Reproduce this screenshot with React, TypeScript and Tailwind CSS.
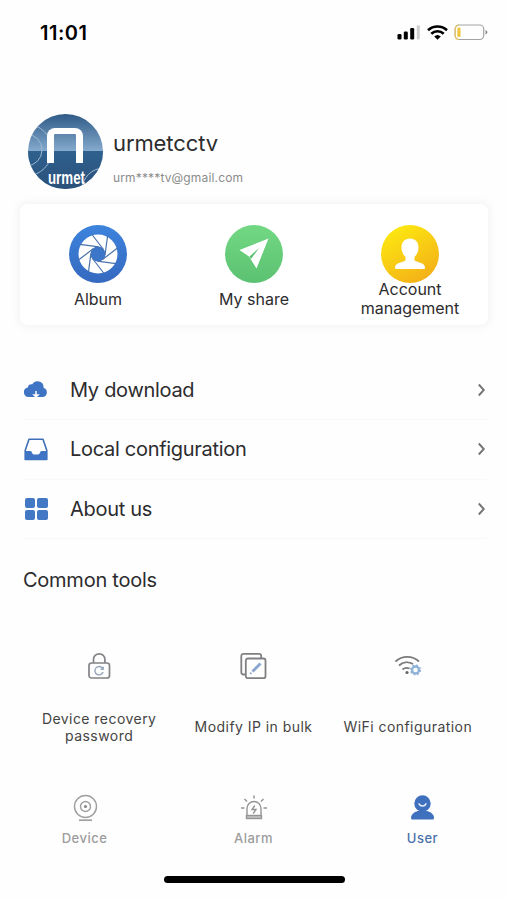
import React from 'react';

const Avatar = () => (
  <div className="relative h-[75px] w-[75px] overflow-hidden rounded-full bg-linear-to-b from-[#2f5b87] to-[#86abce] to-50%">
    <div className="absolute inset-x-0 bottom-0 h-[38px] bg-linear-to-b from-[#2f618e] to-[#2a5079]" />
    <svg className="absolute inset-0" width="75" height="75" viewBox="0 0 75 75" fill="none" stroke="#9db9d3" strokeWidth="1">
      <circle cx="-2" cy="36" r="16" />
      <circle cx="-2" cy="36" r="26" />
      <circle cx="76" cy="76" r="22" />
      <circle cx="76" cy="76" r="15" />
    </svg>
    <div className="absolute left-[19px] top-[14px] h-[35px] w-[36px] rounded-t-[8px] border-x-[7px] border-t-[6px] border-white" />
    <div className="absolute left-[20px] top-[54px] origin-left scale-x-[0.7] font-['Liberation_Sans'] text-[19px] leading-[19px] font-bold text-white">
      urmet
    </div>
  </div>
);

const AlbumIcon = () => (
  <svg width="58" height="58" viewBox="0 0 58 58">
    <defs>
      <linearGradient id="album" x1="0" y1="0" x2="0" y2="1">
        <stop offset="0" stopColor="#3c83dc" />
        <stop offset="1" stopColor="#3669bf" />
      </linearGradient>
    </defs>
    <circle cx="29" cy="29" r="29" fill="url(#album)" />
    <circle cx="29" cy="29" r="19.5" fill="#fff" />
    <circle cx="29" cy="29" r="7.5" fill="#3c76c9" />
    {[0, 45, 90, 135, 180, 225, 270, 315].map((angle) => (
      <path
        key={angle}
        d="M23 9.5 L34.5 24.5"
        stroke="#4a72ab"
        strokeWidth="1.2"
        transform={`rotate(${angle} 29 29)`}
      />
    ))}
  </svg>
);

const ShareIcon = () => (
  <svg width="58" height="58" viewBox="0 0 58 58">
    <defs>
      <linearGradient id="share" x1="0" y1="0" x2="0" y2="1">
        <stop offset="0" stopColor="#72d883" />
        <stop offset="1" stopColor="#5cc273" />
      </linearGradient>
    </defs>
    <circle cx="29" cy="29" r="29" fill="url(#share)" />
    <path d="M43.5 13.500 14.500 25 24 31.500 31.500 43.500z" fill="#fff" />
    <path d="m34 23-9.500 8.500 1.500 2.500z" fill="#5cc273" />
  </svg>
);

const AccountIcon = () => (
  <svg width="58" height="58" viewBox="0 0 58 58">
    <defs>
      <linearGradient id="account" x1="0.2" y1="0" x2="0.8" y2="1">
        <stop offset="0" stopColor="#fdea10" />
        <stop offset="1" stopColor="#f3ad18" />
      </linearGradient>
    </defs>
    <circle cx="29" cy="29" r="29" fill="url(#account)" />
    <path
      d="M29 13.5c-5.300 0-8.500 3.700-8.500 9 0 4 1.500 7 4 9.500v3.500c-3.500 2-10.500 2.500-10.500 7 0 1 .6 1.600 1.600 1.600h26.800c1 0 1.600-.6 1.600-1.600 0-4.500-7-5-10.500-7V32c2.500-2.500 4-5.500 4-9.500 0-5.300-3.200-9-8.500-9z"
      fill="#fff"
    />
  </svg>
);

const CloudIcon = () => (
  <svg width="24" height="24" viewBox="0 0 24 24">
    <path d="M5 19a4.800 4.800 0 0 1-1.200-9.500A4 4 0 0 1 8.300 6.300 6 6 0 0 1 19.500 9.700 4.800 4.800 0 0 1 19 19z" fill="#3f74c4" />
    <path d="M12 13v6M10 17l2 2 2-2z" stroke="#fff" strokeWidth="1.500" fill="#fff" />
  </svg>
);

const InboxIcon = () => (
  <svg width="24" height="24" viewBox="0 0 24 24">
    <path d="M1.200 13.500 5 2.200h14l3.800 11.300v9H1.200z" fill="none" stroke="#3f6fb8" strokeWidth="1.600" strokeLinejoin="round" />
    <path d="M1 14h5.500c1.500 0 1.500 3.500 3.500 3.500h4c2 0 2-3.500 3.500-3.500H23v9H1z" fill="#3f74c4" />
  </svg>
);

const GridIcon = () => (
  <div className="grid h-[22px] w-[23px] grid-cols-2 gap-[2px]">
    {[0, 1, 2, 3].map((i) => (
      <div key={i} className="rounded-[2px] bg-[#4278c4]" />
    ))}
  </div>
);

const LockIcon = () => (
  <svg width="28" height="28" viewBox="0 0 28 28" fill="none" stroke="#838387" strokeWidth="1.700">
    <rect x="4" y="11" width="20.500" height="15" rx="2.500" />
    <path d="M8.500 11V7.500a5.700 5.700 0 0 1 11.400 0V11" />
    <path d="M17.500 16.200a4.200 4.200 0 1 0 .6 3.800M18.200 14.800v2.500h-2.500" stroke="#98a5ba" strokeWidth="1.400" />
  </svg>
);

const ModifyIcon = () => (
  <svg width="28" height="28" viewBox="0 0 28 28" fill="none" stroke="#808084" strokeWidth="1.800">
    <path d="M6 22.500H4.500a2.200 2.200 0 0 1-2.200-2.200V4a2.200 2.200 0 0 1 2.200-2.200h15.500A2.200 2.200 0 0 1 22.200 4v2" />
    <rect x="6.800" y="6.500" width="19.700" height="19.700" rx="2" />
    <path d="m13.500 19.500 8-8" stroke="#8aa4cf" strokeWidth="2.800" />
    <path d="m11.300 21.800 1-1" stroke="#8aa4cf" strokeWidth="2" />
  </svg>
);

const WifiGearIcon = () => (
  <svg width="28" height="24" viewBox="0 0 28 24" fill="none" stroke="#7a7a7a" strokeWidth="1.800">
    <path d="M1.500 7.500a17.500 17.500 0 0 1 23.500 0M5 11.500a12 12 0 0 1 14-1.500M8.500 15.500a7 7 0 0 1 7-1" />
    <circle cx="13" cy="18.500" r="1.600" fill="#666" stroke="none" />
    <circle cx="21.500" cy="16" r="3.500" stroke="#8fb2d6" strokeWidth="2.400" />
    <circle cx="21.500" cy="16" r="5" stroke="#8fb2d6" strokeWidth="1.200" strokeDasharray="2 1.930" />
  </svg>
);

const DeviceIcon = () => (
  <svg width="28" height="28" viewBox="0 0 28 28" fill="none" stroke="#9f9f9f" strokeWidth="1.400">
    <circle cx="14.500" cy="12.500" r="11" />
    <circle cx="14.500" cy="12.500" r="5" />
    <circle cx="14.500" cy="12.500" r="1.600" fill="#888" stroke="none" />
    <path d="M8 26.200h13" strokeWidth="1.700" />
  </svg>
);

const AlarmIcon = () => (
  <svg width="28" height="28" viewBox="0 0 28 28" fill="none" stroke="#959595" strokeWidth="1.400">
    <path d="M7 21.500v-7a7 7 0 0 1 14 0v7" />
    <rect x="6.500" y="21.500" width="15" height="3" fill="#c4c4c4" />
    <path d="M14.800 11.500 12 15.500h4l-2.800 4" />
    <path d="M14 1.500v3M4.500 5 7 7.500M23.500 5 21 7.500M1 14h3.500M23.500 14H27" strokeWidth="1.500" />
  </svg>
);

const UserIcon = () => (
  <svg width="28" height="28" viewBox="0 0 28 28">
    <circle cx="13.500" cy="9.500" r="8.200" fill="#3f70bd" />
    <path d="M2 24c0-4 4-6.500 7.500-7.300h8c3.500.8 7.500 3.300 7.500 7.300 0 .9-.5 1.500-1.500 1.500h-20c-1 0-1.500-.6-1.500-1.500z" fill="#3f70bd" />
    <path d="M10 9.800a3.900 3.900 0 0 0 7 0" fill="none" stroke="#e8f0fb" strokeWidth="1.500" strokeLinecap="round" />
  </svg>
);

const StatusIcons = () => (
  <svg width="92" height="18" viewBox="0 0 92 18">
    <rect x="0.500" y="10" width="4" height="5.500" rx="1.300" />
    <rect x="6.800" y="7.500" width="4" height="8" rx="1.300" />
    <rect x="13.200" y="4" width="4" height="11.500" rx="1.300" />
    <rect x="19.800" y="1.200" width="3" height="14.300" rx="1" fill="#cfcfcf" />
    <g fill="none" stroke="#000" strokeWidth="2.600">
      <path d="M31 6.300a13.700 13.700 0 0 1 19 0" />
      <path d="M34.300 9.800a9 9 0 0 1 12.400 0" />
    </g>
    <path d="M40.500 15.800 37.200 12.500a4.800 4.800 0 0 1 6.600 0z" />
    <rect x="58.200" y="1" width="28.500" height="14.500" rx="4" fill="none" stroke="#a3a3a3" strokeWidth="1.200" />
    <path d="M62 1a3.800 3.800 0 0 0-3.800 3.800v7a3.800 3.800 0 0 0 3.800 3.700" fill="none" stroke="#e6c766" strokeWidth="1.200" />
    <rect x="60.300" y="3.500" width="3.200" height="9.500" rx="1.300" fill="#f0c63c" />
    <path d="M88.500 6v4.500c1.200-.4 1.900-1.200 1.900-2.200s-.7-1.900-1.900-2.300z" fill="#8a8a8a" />
  </svg>
);

const ChevronIcon = () => (
  <svg width="10" height="14" viewBox="0 0 10 14" fill="none" stroke="#757575" strokeWidth="1.900">
    <path d="m1.800 1.500 5 5.500-5 5.500" />
  </svg>
);

const shortcuts = [
  { label: 'Album', icon: <AlbumIcon /> },
  { label: 'My share', icon: <ShareIcon /> },
  { label: 'Account management', icon: <AccountIcon /> },
];

const menuItems = [
  { label: 'My download', icon: <CloudIcon /> },
  { label: 'Local configuration', icon: <InboxIcon /> },
  { label: 'About us', icon: <GridIcon /> },
];

const tools = [
  { label: 'Device recovery password', icon: <LockIcon /> },
  { label: 'Modify IP in bulk', icon: <ModifyIcon /> },
  { label: 'WiFi configuration', icon: <WifiGearIcon /> },
];

const tabs = [
  { label: 'Device', icon: <DeviceIcon />, active: false },
  { label: 'Alarm', icon: <AlarmIcon />, active: false },
  { label: 'User', icon: <UserIcon />, active: true },
];

export default function App() {
  return (
    <div className="flex h-[900px] w-[507px] flex-col overflow-hidden bg-[#fefefe] font-['Inter',sans-serif] text-[#2c2c2e]">
      {/* Status bar */}
      <div className="flex h-[65px] shrink-0 items-center justify-between pl-[40px] pr-[18px]">
        <span className="text-[20px] font-semibold tracking-[0.5px] text-black">11:01</span>
        <StatusIcons />
      </div>

      {/* Profile */}
      <div className="mt-[49px] flex h-[75px] shrink-0 gap-[10px] pl-[28px]">
        <Avatar />
        <div className="flex flex-col pt-[15px]">
          <span className="text-[22px] leading-[28px] tracking-[-0.1px]">urmetcctv</span>
          <span className="mt-[13px] text-[12px] leading-[16px] tracking-[0.15px] text-[#8c8c8c]">urm****tv@gmail.com</span>
        </div>
      </div>

      {/* Shortcuts */}
      <div className="mx-[20px] mt-[15px] grid h-[121px] w-[468px] shrink-0 grid-cols-3 rounded-[8px] bg-white pt-[21px] shadow-[0_0_9px_3px_rgba(0,0,0,0.04)]">
        {shortcuts.map(({ label, icon }) => (
          <button key={label} className="flex flex-col items-center">
            {icon}
            <span className="-mt-[3px] flex h-[38px] w-[110px] items-center justify-center text-center text-[16px] leading-[19px]">
              {label}
            </span>
          </button>
        ))}
      </div>

      {/* Menu */}
      <div className="ml-[24px] mr-[20px] mt-[36px] shrink-0">
        {menuItems.map(({ label, icon }) => (
          <button key={label} className="flex h-[59.3px] w-full items-center border-b border-[#f8f8f8] text-left">
            <span className="flex w-[24px] justify-center">{icon}</span>
            <span className="ml-[22px] flex-1 text-[20px] tracking-[-0.3px]">{label}</span>
            <ChevronIcon />
          </button>
        ))}
      </div>

      <h2 className="ml-[23px] mt-[27px] shrink-0 text-[20px] leading-[28px] tracking-[-0.25px]">Common tools</h2>

      {/* Tools */}
      <div className="mx-[22px] mt-[58px] grid h-[96px] shrink-0 grid-cols-3">
        {tools.map(({ label, icon }) => (
          <button key={label} className="flex flex-col items-center">
            <span className="flex h-[28px] items-center">{icon}</span>
            <span className="mt-[30px] flex h-[34px] w-[140px] items-center justify-center text-center text-[14px] leading-[17px] tracking-[0.45px] text-[#444]">
              {label}
            </span>
          </button>
        ))}
      </div>

      {/* Tab bar */}
      <div className="mt-[46px] grid shrink-0 grid-cols-3">
        {tabs.map(({ label, icon, active }) => (
          <button key={label} className={`flex flex-col items-center ${active ? 'text-[#4a6fa8]' : 'text-[#9c9c9c]'}`}>
            {icon}
            <span className="mt-[8px] text-[13px] leading-[16px] font-medium tracking-[0.5px]">{label}</span>
          </button>
        ))}
      </div>

      {/* Home indicator */}
      <div className="ml-[164px] mt-[30px] h-[7px] w-[181px] shrink-0 rounded-full bg-black" />
    </div>
  );
}
